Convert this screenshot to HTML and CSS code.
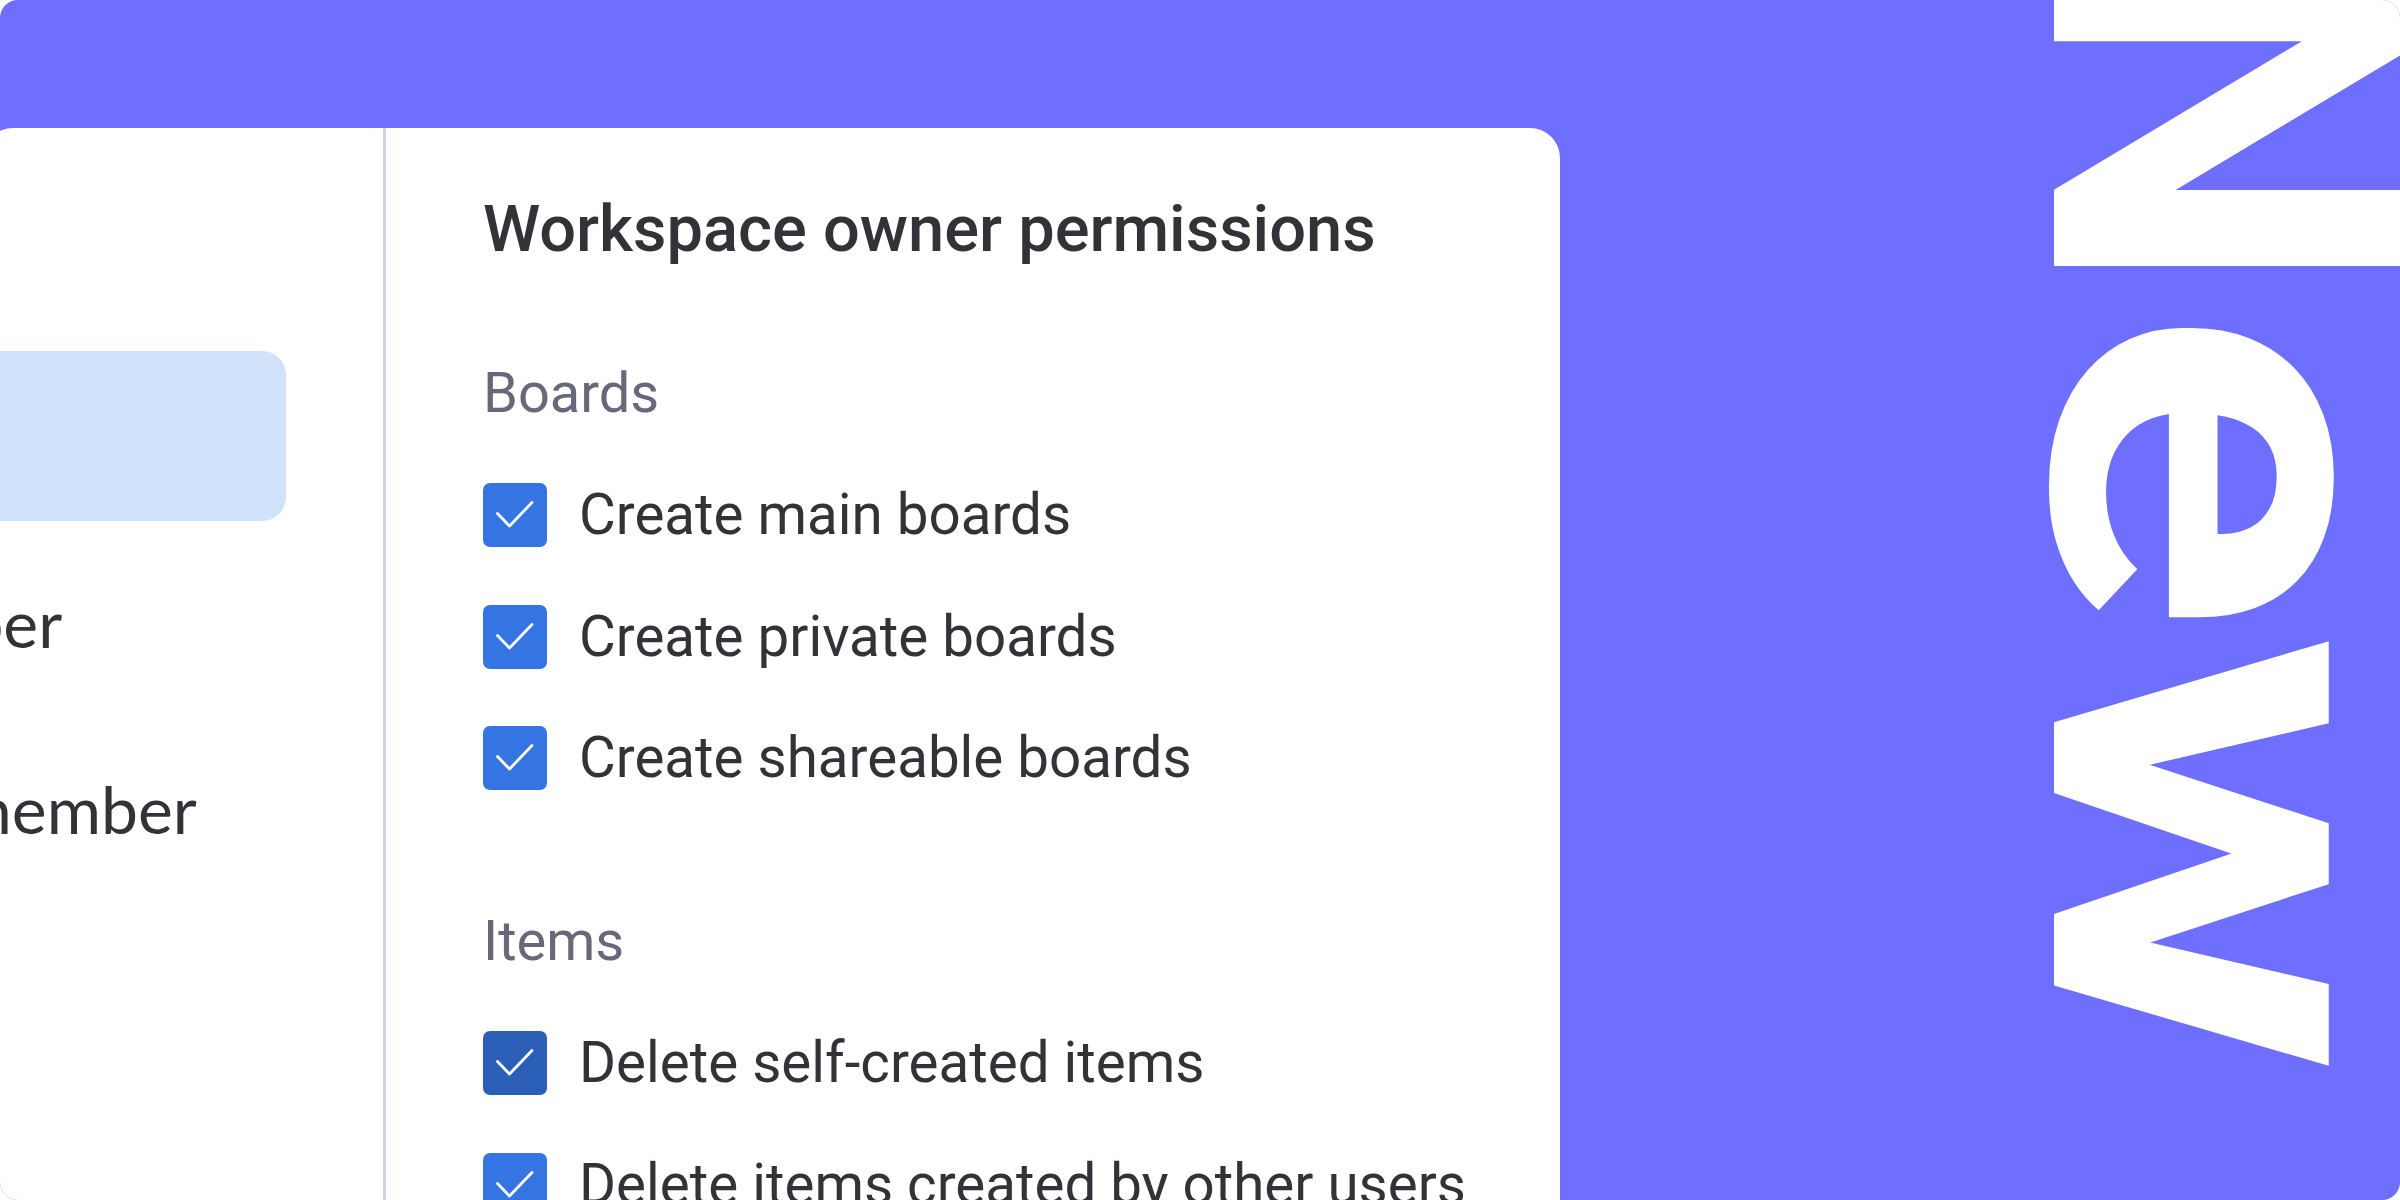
FILE: index.html
```html
<!DOCTYPE html>
<html lang="en">
<head>
  <meta charset="UTF-8" />
  <meta name="viewport" content="width=device-width, initial-scale=1.0">
  <title>Workspace owner permissions</title>
  <link rel="stylesheet" href="styles.css">
</head>
<body>
  <div class="banner">
    <div class="card">
      <aside class="roles">
        <div class="role active"><span>Guest</span></div>
        <div class="role"><span>Member</span></div>
        <div class="role"><span>Past member</span></div>
      </aside>

      <section class="perms">
        <h2>Workspace owner permissions</h2>

        <div class="group">
          <h3>Boards</h3>
          <ul>
            <li><span class="box"><svg viewBox="0 0 64 64"><path d="M14.5 30.5 L26.5 43 L49 19.5" /></svg></span>Create main boards</li>
            <li><span class="box"><svg viewBox="0 0 64 64"><path d="M14.5 30.5 L26.5 43 L49 19.5" /></svg></span>Create private boards</li>
            <li><span class="box"><svg viewBox="0 0 64 64"><path d="M14.5 30.5 L26.5 43 L49 19.5" /></svg></span>Create shareable boards</li>
          </ul>
        </div>

        <div class="group">
          <h3>Items</h3>
          <ul>
            <li><span class="box hover"><svg viewBox="0 0 64 64"><path d="M14.5 30.5 L26.5 43 L49 19.5" /></svg></span>Delete self-created items</li>
            <li><span class="box"><svg viewBox="0 0 64 64"><path d="M14.5 30.5 L26.5 43 L49 19.5" /></svg></span>Delete items created by other users</li>
          </ul>
        </div>
      </section>
    </div>

    <div class="tag">N<span class="tail">ew</span></div>
  </div>
</body>
</html>
```

FILE: styles.css
```css
* {
  box-sizing: border-box;
}

body {
  margin: 0;
  background: #ffffff;
}

.banner {
  width: 2400px;
  height: 1200px;
  background: #6e6eff;
  border-radius: 18px;
  overflow: hidden;
  display: flex;
  align-items: flex-start;
}

/* white settings card, runs off the left and bottom edges */
.card {
  flex: none;
  width: 1577px;
  height: 1200px;
  margin: 128px 0 0 -17px;
  background: #ffffff;
  border-radius: 30px 30px 0 0;
  display: flex;
}

.roles {
  flex: none;
  width: 403px;
  padding-top: 223px;
  border-right: 3px solid #cfd3e6;
  display: flex;
  flex-direction: column;
  gap: 16px;
}

.role {
  height: 170px;
  margin-right: 97px;
  display: flex;
  align-items: center;
  border-radius: 0 24px 24px 0;
  font-family: 'Lato', sans-serif;
  font-size: 66px;
  color: #323338;
  white-space: nowrap;
}

.role span {
  margin-left: -166px;
}

.role.active {
  background: #d0e3fb;
}

.perms {
  flex: 1;
  padding: 62px 0 0 97px;
  font-family: 'Roboto', sans-serif;
  color: #323338;
}

.perms h2 {
  margin: 0;
  font-size: 65px;
  font-weight: 500;
  line-height: 78px;
}

.group {
  margin-top: 118px;
}

.group:first-of-type {
  margin-top: 92px;
}

.group h3 {
  margin: 0 0 57px;
  font-size: 56px;
  font-weight: 400;
  line-height: 66px;
  color: #676879;
}

.group ul {
  list-style: none;
  margin: 0;
  padding: 0;
  display: flex;
  flex-direction: column;
  gap: 57.5px;
}

.group li {
  height: 64px;
  display: flex;
  align-items: center;
  gap: 32px;
  font-size: 56.5px;
  white-space: nowrap;
}

.box {
  flex: none;
  width: 64px;
  height: 64px;
  border-radius: 7px;
  background: #3574e3;
  display: flex;
}

.box.hover {
  background: #2b5eb6;
}

.box svg {
  width: 64px;
  height: 64px;
  fill: none;
  stroke: #ffffff;
  stroke-width: 2.8;
  stroke-linecap: round;
  stroke-linejoin: round;
}

/* big sideways label on the right */
.tag {
  flex: none;
  margin: -68px -91px 0 auto;
  writing-mode: vertical-rl;
  text-orientation: sideways;
  font-family: 'Roboto', sans-serif;
  font-size: 520px;
  font-weight: 700;
  line-height: 1;
  color: #ffffff;
  white-space: nowrap;
}

/* lower-case letters run a bit wider than the N */
.tag .tail {
  display: inline-block;
  margin-top: 8px;
  transform: scaleY(1.16);
  transform-origin: top;
}
```
